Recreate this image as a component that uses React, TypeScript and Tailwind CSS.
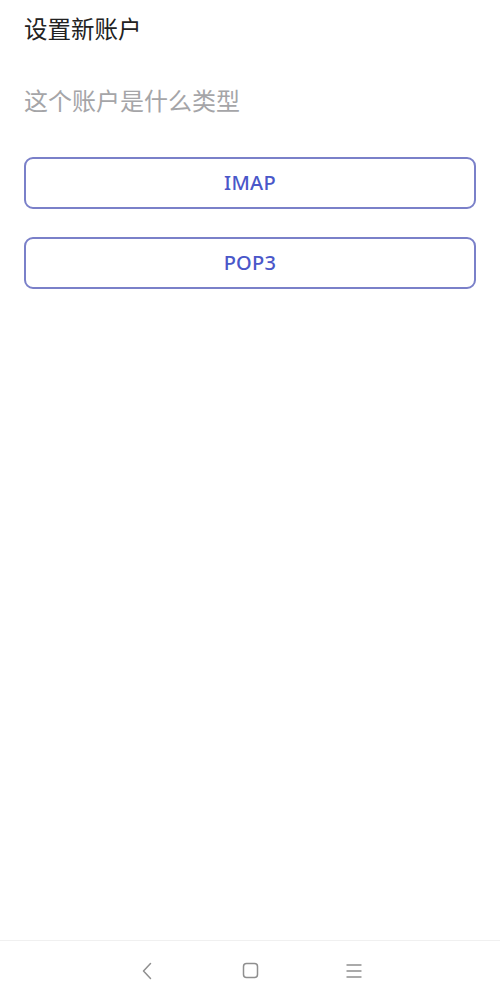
const font = { fontFamily: '"Noto Sans", "Noto Sans CJK SC", sans-serif' }

export default function App() {
  const types = ["IMAP", "POP3"]

  return (
    <div className="flex h-[1002px] w-[500px] flex-col bg-white" style={font}>
      <main className="flex-1 px-6">
        <h1 className="pt-[13px] text-[23.5px] leading-[32px] text-[#222222]">设置新账户</h1>
        <p className="mt-[40px] text-[24px] leading-[32px] text-[#a5a5a8]">这个账户是什么类型</p>

        <div className="mt-[40px] flex flex-col gap-[28px]">
          {types.map((t) => (
            <button
              key={t}
              className="flex h-[52px] w-full items-center justify-center rounded-[9px] border-2 border-[#7a80c9] text-[20px] font-medium tracking-[0.3px] text-[#4a57c9]"
            >
              {t}
            </button>
          ))}
        </div>
      </main>

      <nav className="flex h-[62px] items-center justify-center gap-[87px] border-t border-[#f0f0f0] pb-[2px]">
        <svg width="16" height="18" viewBox="0 0 16 18" fill="none" stroke="#8f8f8f" strokeWidth="1.5" strokeLinecap="round" strokeLinejoin="round">
          <path d="M11.5 1.5 4.5 9l7 7.5" />
        </svg>
        <svg width="17" height="17" viewBox="0 0 17 17" fill="none" stroke="#8f8f8f" strokeWidth="1.5">
          <rect x="1.5" y="1.5" width="14" height="14" rx="3" />
        </svg>
        <svg width="16" height="16" viewBox="0 0 16 16" fill="none" stroke="#8f8f8f" strokeWidth="1.4" strokeLinecap="round">
          <path d="M1 2h14M1 8h14M1 14h14" />
        </svg>
      </nav>
    </div>
  )
}
